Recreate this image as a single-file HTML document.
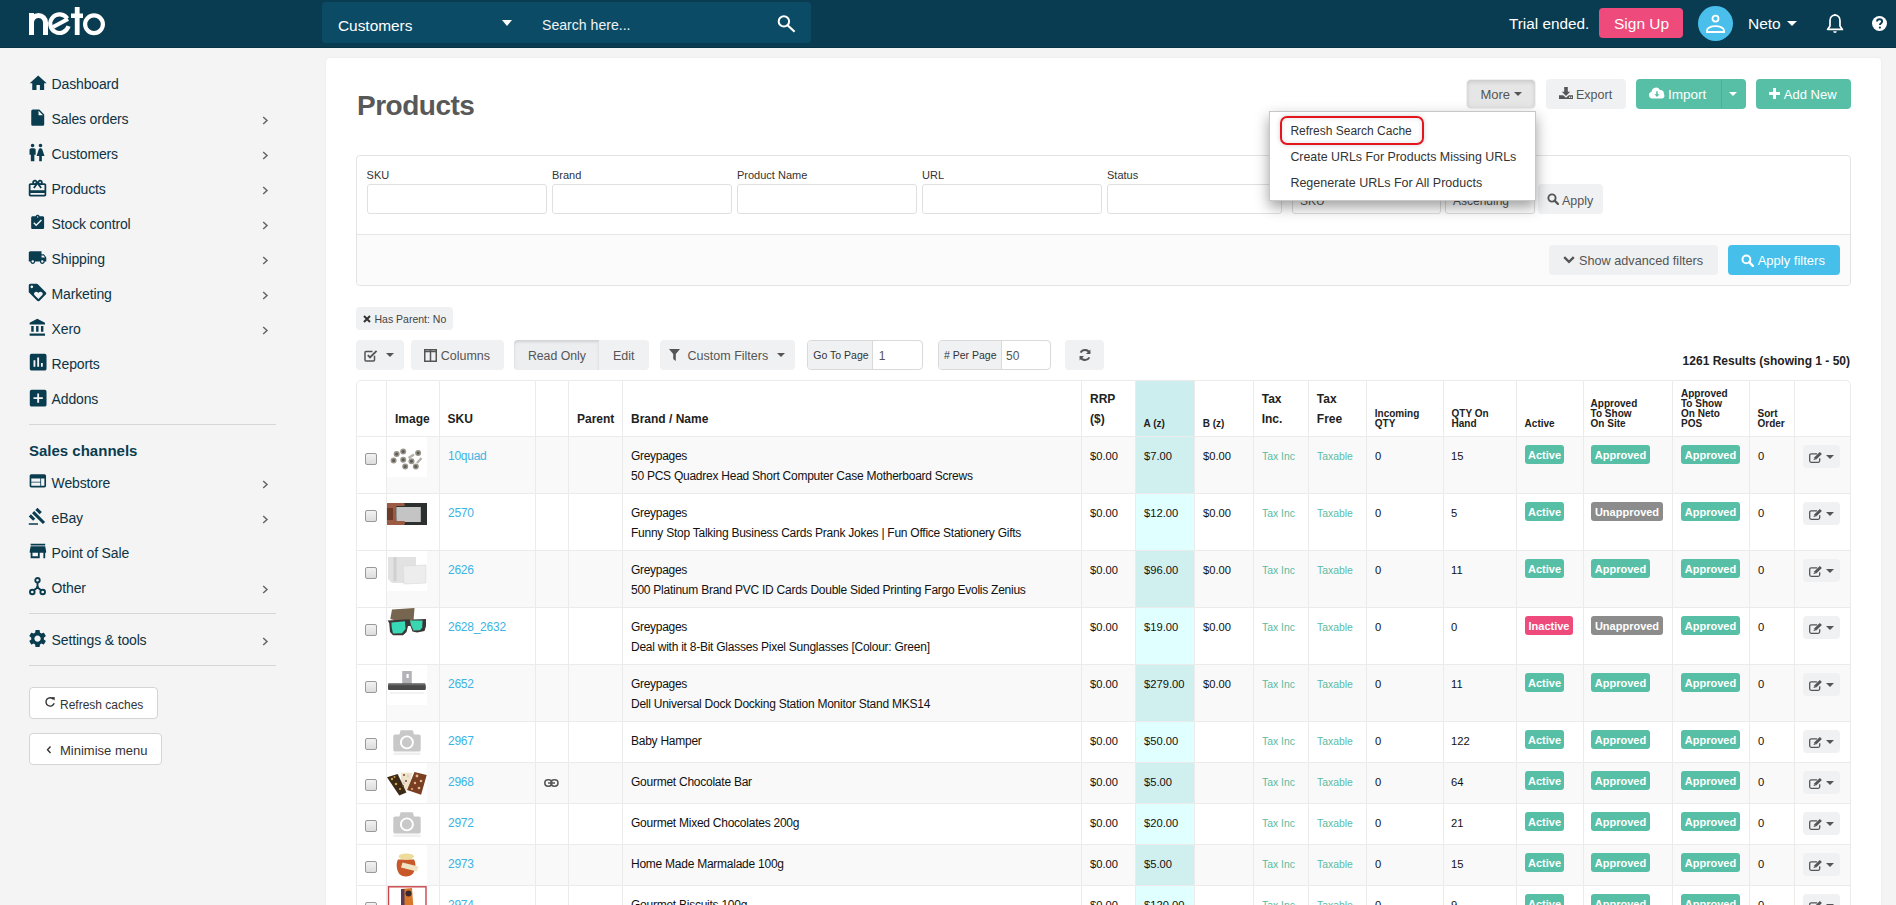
<!DOCTYPE html><html><head><meta charset="utf-8"><style>
html,body{margin:0;padding:0;}
body{width:1896px;height:905px;overflow:hidden;position:relative;background:#f4f4f4;font-family:"Liberation Sans", sans-serif;}
.a{position:absolute;display:block;}
.t{position:absolute;white-space:pre;line-height:1;}
</style></head><body>
<div class="a" style="left:0px;top:0px;width:1896px;height:48px;background:#093c51;"></div><div class="a" style="left:0px;top:47px;width:1896px;height:1px;background:#073345;"></div><svg class="a" style="left:0px;top:0px;" width="120" height="48" viewBox="0 0 120 48">
<g fill="none" stroke="#fff" stroke-width="5">
<path d="M31.5 35V13 M31.5 22.5a7 7 0 0 1 14 0V35"/>
</g>
<g fill="none" stroke="#fff" stroke-width="4.2">
<path d="M68.5 26.2 A9.3 9.3 0 1 1 67.3 18.5"/>
<path d="M53 27 L68 19"/>
<circle cx="94" cy="24.2" r="8.9"/>
</g>
<rect x="74.8" y="7" width="4.8" height="28" fill="#fff"/>
<rect x="71" y="13.5" width="12" height="4.5" fill="#fff"/>
</svg><div class="a" style="left:322px;top:2px;width:489px;height:41px;background:#0c4b66;border-radius:4px;"></div><div class="t" style="left:338.00px;top:17.96px;font-size:15.4px;color:#fff;font-weight:normal;">Customers</div><svg class="a" style="left:502px;top:20px;" width="10" height="6" viewBox="0 0 10 6"><path d="M0 0H10L5 6z" fill="#fff"/></svg><div class="t" style="left:542.00px;top:18.06px;font-size:14.1px;color:#eef3f5;font-weight:normal;">Search here...</div><svg class="a" style="left:775px;top:12px;" width="24" height="24" viewBox="0 0 24 24"><circle cx="8.9" cy="9.4" r="5.2" fill="none" stroke="#fff" stroke-width="2"/><path d="M12.6 13.2L19.6 19.8" stroke="#fff" stroke-width="2.2"/></svg><div class="t" style="left:1509.00px;top:16.05px;font-size:15.3px;color:#fff;font-weight:normal;">Trial ended.</div><div class="a" style="left:1599px;top:8px;width:84px;height:30px;background:#ee4a7c;border-radius:4px;"></div><div class="t" style="left:1614.00px;top:15.88px;font-size:15.5px;color:#fff;font-weight:normal;">Sign Up</div><div class="a" style="left:1698px;top:6px;width:35px;height:35px;background:#4bbfeb;border-radius:50%;"></div><svg class="a" style="left:1704px;top:12px;" width="24" height="24" viewBox="0 0 24 24"><circle cx="11.5" cy="6.6" r="3" fill="none" stroke="#fff" stroke-width="1.8"/><path d="M3 20v-1.5c0-2.5 4-4.3 8.5-4.3s8.5 1.8 8.5 4.3V20z" fill="none" stroke="#fff" stroke-width="1.8"/></svg><div class="t" style="left:1748.00px;top:15.88px;font-size:15.5px;color:#fff;font-weight:normal;">Neto</div><svg class="a" style="left:1787px;top:21px;" width="10" height="5" viewBox="0 0 10 5"><path d="M0 0H10L5 5z" fill="#fff"/></svg><svg class="a" style="left:1825px;top:13px;" width="20" height="21" viewBox="0 0 20 21"><path d="M10 2.2c-3.2 0-5 2.6-5 5.6v5.2L2.6 16.4h14.8L15 13V7.8c0-3-1.8-5.6-5-5.6z" fill="none" stroke="#fff" stroke-width="1.7" stroke-linejoin="round"/><path d="M8.2 18.2h3.6a1.8 1.8 0 0 1-3.6 0z" fill="#fff"/><rect x="9.2" y="1" width="1.6" height="2" fill="#fff"/></svg><svg class="a" style="left:1872px;top:16px;" width="15" height="15" viewBox="0 0 15 15"><circle cx="7.5" cy="7.5" r="7.5" fill="#fff"/><path d="M5 5.6c0-1.5 1.1-2.4 2.6-2.4s2.5.9 2.5 2.2c0 1.8-2.2 1.9-2.2 3.6" fill="none" stroke="#093c51" stroke-width="1.9"/><circle cx="7.9" cy="11.6" r="1.1" fill="#093c51"/></svg><div class="t" style="left:51.60px;top:77.15px;font-size:14px;color:#0d3344;font-weight:normal;letter-spacing:-0.15px;">Dashboard</div><svg class="a" style="left:27.60px;top:72.75px;" width="20.40" height="20.40" viewBox="0 0 24 24"><path fill="#0a3c50" fill-rule="evenodd" d="M10 20v-6h4v6h5v-8h3L12 3 2 12h3v8z"/></svg><div class="t" style="left:51.60px;top:112.15px;font-size:14px;color:#0d3344;font-weight:normal;letter-spacing:-0.15px;">Sales orders</div><svg class="a" style="left:27.85px;top:107.50px;" width="19.44" height="19.44" viewBox="0 0 24 24"><path fill="#0a3c50" fill-rule="evenodd" d="M6 2c-1.1 0-1.99.9-1.99 2L4 20c0 1.1.89 2 1.99 2H18c1.1 0 2-.9 2-2V8l-6-6H6zm7 7V3.5L18.5 9H13z"/></svg><svg class="a" style="left:261px;top:115.5px;" width="8" height="9" viewBox="0 0 8 9"><path d="M2.2 1L6 4.5L2.2 8" fill="none" stroke="#666" stroke-width="1.5"/></svg><div class="t" style="left:51.60px;top:147.15px;font-size:14px;color:#0d3344;font-weight:normal;letter-spacing:-0.15px;">Customers</div><svg class="a" style="left:26.10px;top:141.90px;" width="21.12" height="21.12" viewBox="0 0 24 24"><path fill="#0a3c50" fill-rule="evenodd" d="M5.5 22v-7.5H4V9c0-1.1.9-2 2-2h3c1.1 0 2 .9 2 2v5.5H9.5V22h-4zM18 22v-6h3l-2.54-7.63C18.18 7.55 17.42 7 16.56 7h-.12c-.86 0-1.63.55-1.9 1.37L12 16h3v6h3zM7.5 6c1.11 0 2-.89 2-2s-.89-2-2-2-2 .89-2 2 .89 2 2 2zm9 0c1.11 0 2-.89 2-2s-.89-2-2-2-2 .89-2 2 .89 2 2 2z"/></svg><svg class="a" style="left:261px;top:150.5px;" width="8" height="9" viewBox="0 0 8 9"><path d="M2.2 1L6 4.5L2.2 8" fill="none" stroke="#666" stroke-width="1.5"/></svg><div class="t" style="left:51.60px;top:182.15px;font-size:14px;color:#0d3344;font-weight:normal;letter-spacing:-0.15px;">Products</div><svg class="a" style="left:26.95px;top:177.65px;" width="21.00" height="21.00" viewBox="0 0 24 24"><path fill="#0a3c50" fill-rule="evenodd" d="M20 6h-2.18c.11-.31.18-.65.18-1 0-1.66-1.34-3-3-3-1.05 0-1.96.54-2.5 1.35l-.5.67-.5-.68C10.96 2.54 10.05 2 9 2 7.34 2 6 3.34 6 5c0 .35.07.69.18 1H4c-1.11 0-1.99.89-1.99 2L2 19c0 1.11.89 2 2 2h16c1.11 0 2-.89 2-2V8c0-1.11-.89-2-2-2zm-5-2c.55 0 1 .45 1 1s-.45 1-1 1-1-.45-1-1 .45-1 1-1zM9 4c.55 0 1 .45 1 1s-.45 1-1 1-1-.45-1-1 .45-1 1-1zm11 15H4v-2h16v2zm0-5H4V8h5.08L7 10.83 8.62 12 11 8.76l1-1.36 1 1.36L15.38 12 17 10.83 14.92 8H20v6z"/></svg><svg class="a" style="left:261px;top:185.5px;" width="8" height="9" viewBox="0 0 8 9"><path d="M2.2 1L6 4.5L2.2 8" fill="none" stroke="#666" stroke-width="1.5"/></svg><div class="t" style="left:51.60px;top:217.15px;font-size:14px;color:#0d3344;font-weight:normal;letter-spacing:-0.15px;">Stock control</div><svg class="a" style="left:28.94px;top:214.00px;" width="17.28" height="17.28" viewBox="0 0 24 24"><path fill="#0a3c50" fill-rule="evenodd" d="M19 3h-4.18C14.4 1.84 13.3 1 12 1c-1.3 0-2.4.84-2.82 2H5c-1.1 0-2 .9-2 2v14c0 1.1.9 2 2 2h14c1.1 0 2-.9 2-2V5c0-1.1-.9-2-2-2zm-7 0c.55 0 1 .45 1 1s-.45 1-1 1-1-.45-1-1 .45-1 1-1zm-2 14l-4-4 1.41-1.41L10 14.17l6.59-6.59L18 9l-8 8z"/></svg><svg class="a" style="left:261px;top:220.5px;" width="8" height="9" viewBox="0 0 8 9"><path d="M2.2 1L6 4.5L2.2 8" fill="none" stroke="#666" stroke-width="1.5"/></svg><div class="t" style="left:51.60px;top:252.15px;font-size:14px;color:#0d3344;font-weight:normal;letter-spacing:-0.15px;">Shipping</div><svg class="a" style="left:27.90px;top:247.70px;" width="19.08" height="19.08" viewBox="0 0 24 24"><path fill="#0a3c50" fill-rule="evenodd" d="M20 8h-3V4H3c-1.1 0-2 .9-2 2v11h2c0 1.66 1.34 3 3 3s3-1.34 3-3h6c0 1.66 1.34 3 3 3s3-1.34 3-3h2v-5l-3-4zM6 18.5c-.83 0-1.5-.67-1.5-1.5s.67-1.5 1.5-1.5 1.5.67 1.5 1.5-.67 1.5-1.5 1.5zm13.5-9l1.96 2.5H17V9.5h2.5zm-1.5 9c-.83 0-1.5-.67-1.5-1.5s.67-1.5 1.5-1.5 1.5.67 1.5 1.5-.67 1.5-1.5 1.5z"/></svg><svg class="a" style="left:261px;top:255.5px;" width="8" height="9" viewBox="0 0 8 9"><path d="M2.2 1L6 4.5L2.2 8" fill="none" stroke="#666" stroke-width="1.5"/></svg><div class="t" style="left:51.60px;top:287.15px;font-size:14px;color:#0d3344;font-weight:normal;letter-spacing:-0.15px;">Marketing</div><svg class="a" style="left:26.95px;top:282.45px;" width="21.00" height="21.00" viewBox="0 0 24 24"><path fill="#0a3c50" fill-rule="evenodd" d="M21.41 11.58l-9-9C12.05 2.22 11.55 2 11 2H4c-1.1 0-2 .9-2 2v7c0 .55.22 1.05.59 1.42l9 9c.36.36.86.58 1.41.58.55 0 1.05-.22 1.41-.59l7-7c.37-.36.59-.86.59-1.41 0-.55-.23-1.06-.59-1.42zM5.5 7C4.67 7 4 6.33 4 5.5S4.67 4 5.5 4 7 4.67 7 5.5 6.33 7 5.5 7zm11.77 8.27L13 19.54l-4.27-4.27C8.28 14.81 8 14.19 8 13.5c0-1.38 1.12-2.5 2.5-2.5.69 0 1.32.28 1.77.74l.73.72.73-.73c.45-.45 1.08-.73 1.77-.73 1.38 0 2.5 1.12 2.5 2.5 0 .69-.28 1.32-.73 1.77z"/></svg><svg class="a" style="left:261px;top:290.5px;" width="8" height="9" viewBox="0 0 8 9"><path d="M2.2 1L6 4.5L2.2 8" fill="none" stroke="#666" stroke-width="1.5"/></svg><div class="t" style="left:51.60px;top:322.15px;font-size:14px;color:#0d3344;font-weight:normal;letter-spacing:-0.15px;">Xero</div><svg class="a" style="left:27.98px;top:318.20px;" width="19.44" height="19.44" viewBox="0 0 24 24"><path fill="#0a3c50" fill-rule="evenodd" d="M4 10v7h3v-7H4zm6 0v7h3v-7h-3zM2 22h19v-3H2v3zm14-12v7h3v-7h-3zm-4.5-9L2 6v2h19V6l-9.5-5z"/></svg><svg class="a" style="left:261px;top:325.5px;" width="8" height="9" viewBox="0 0 8 9"><path d="M2.2 1L6 4.5L2.2 8" fill="none" stroke="#666" stroke-width="1.5"/></svg><div class="t" style="left:51.60px;top:357.15px;font-size:14px;color:#0d3344;font-weight:normal;letter-spacing:-0.15px;">Reports</div><svg class="a" style="left:26.50px;top:350.90px;" width="22.32" height="22.32" viewBox="0 0 24 24"><path fill="#0a3c50" fill-rule="evenodd" d="M19 3H5c-1.1 0-2 .9-2 2v14c0 1.1.9 2 2 2h14c1.1 0 2-.9 2-2V5c0-1.1-.9-2-2-2zM9 17H7v-7h2v7zm4 0h-2V7h2v10zm4 0h-2v-4h2v4z"/></svg><div class="t" style="left:51.60px;top:392.15px;font-size:14px;color:#0d3344;font-weight:normal;letter-spacing:-0.15px;">Addons</div><svg class="a" style="left:26.50px;top:386.60px;" width="22.32" height="22.32" viewBox="0 0 24 24"><path fill="#0a3c50" fill-rule="evenodd" d="M19 3H5c-1.11 0-2 .9-2 2v14c0 1.1.89 2 2 2h14c1.1 0 2-.9 2-2V5c0-1.1-.9-2-2-2zm-2 10h-4v4h-2v-4H7v-2h4V7h2v4h4v2z"/></svg><div class="a" style="left:29px;top:424px;width:247px;height:1px;background:#d6d6d6;"></div><div class="t" style="left:29.00px;top:443.30px;font-size:15px;color:#0a3c50;font-weight:bold;">Sales channels</div><div class="t" style="left:51.60px;top:476.15px;font-size:14px;color:#0d3344;font-weight:normal;letter-spacing:-0.15px;">Webstore</div><svg class="a" style="left:27.56px;top:471.30px;" width="19.68" height="19.68" viewBox="0 0 24 24"><path fill="#0a3c50" fill-rule="evenodd" d="M20 4H4c-1.1 0-1.99.9-1.99 2L2 18c0 1.1.9 2 2 2h16c1.1 0 2-.9 2-2V6c0-1.1-.9-2-2-2zm-5 14H4v-4h11v4zm0-5H4V9h11v4zm5 5h-4V9h4v9z"/></svg><svg class="a" style="left:261px;top:479.5px;" width="8" height="9" viewBox="0 0 8 9"><path d="M2.2 1L6 4.5L2.2 8" fill="none" stroke="#666" stroke-width="1.5"/></svg><div class="t" style="left:51.60px;top:511.15px;font-size:14px;color:#0d3344;font-weight:normal;letter-spacing:-0.15px;">eBay</div><svg class="a" style="left:28.40px;top:507.00px;" width="18.48" height="18.48" viewBox="0 0 24 24"><path fill="#0a3c50" fill-rule="evenodd" d="M1 21h12v2H1zM5.245 8.07l2.83-2.827 14.14 14.142-2.828 2.828zM12.317 1l5.657 5.656-2.83 2.83-5.654-5.66zM3.825 9.485l5.657 5.657-2.828 2.828-5.657-5.657z"/></svg><svg class="a" style="left:261px;top:514.5px;" width="8" height="9" viewBox="0 0 8 9"><path d="M2.2 1L6 4.5L2.2 8" fill="none" stroke="#666" stroke-width="1.5"/></svg><div class="t" style="left:51.60px;top:546.15px;font-size:14px;color:#0d3344;font-weight:normal;letter-spacing:-0.15px;">Point of Sale</div><svg class="a" style="left:26.50px;top:539.90px;" width="21.84" height="21.84" viewBox="0 0 24 24"><path fill="#0a3c50" fill-rule="evenodd" d="M20 4H4v2h16V4zm1 10v-2l-1-5H4l-1 5v2h1v6h10v-6h4v6h2v-6h1zm-9 4H6v-4h6v4z"/></svg><div class="t" style="left:51.60px;top:581.15px;font-size:14px;color:#0d3344;font-weight:normal;letter-spacing:-0.15px;">Other</div><svg class="a" style="left:261px;top:584.5px;" width="8" height="9" viewBox="0 0 8 9"><path d="M2.2 1L6 4.5L2.2 8" fill="none" stroke="#666" stroke-width="1.5"/></svg><svg class="a" style="left:29px;top:577px;" width="17" height="19" viewBox="0 0 17 19"><g fill="none" stroke="#0b3b4f" stroke-width="1.9"><circle cx="8.5" cy="3.2" r="2.2"/><circle cx="3.3" cy="15" r="2.3"/><circle cx="13.7" cy="15" r="2.3"/><path d="M8.5 5.4V10.5L4.8 13.3M8.5 10.5L12.2 13.3"/></g><circle cx="8.5" cy="10.5" r="1.4" fill="#0b3b4f"/></svg><div class="a" style="left:29px;top:613px;width:247px;height:1px;background:#d6d6d6;"></div><div class="t" style="left:51.60px;top:633.15px;font-size:14px;color:#0d3344;font-weight:normal;letter-spacing:-0.15px;">Settings &amp; tools</div><svg class="a" style="left:26.80px;top:627.80px;" width="21.12" height="21.12" viewBox="0 0 24 24"><path fill="#0a3c50" fill-rule="evenodd" d="M19.14 12.94c.04-.3.06-.61.06-.94 0-.32-.02-.64-.07-.94l2.03-1.58c.18-.14.23-.41.12-.61l-1.92-3.32c-.12-.22-.37-.29-.59-.22l-2.39.96c-.5-.38-1.03-.7-1.62-.94l-.36-2.54c-.04-.24-.24-.41-.48-.41h-3.84c-.24 0-.43.17-.47.41l-.36 2.54c-.59.24-1.13.57-1.62.94l-2.39-.96c-.22-.08-.47 0-.59.22L2.74 8.87c-.12.21-.08.47.12.61l2.03 1.58c-.05.3-.09.63-.09.94s.02.64.07.94l-2.03 1.58c-.18.14-.23.41-.12.61l1.92 3.32c.12.22.37.29.59.22l2.39-.96c.5.38 1.03.7 1.62.94l.36 2.54c.05.24.24.41.48.41h3.84c.24 0 .44-.17.47-.41l.36-2.54c.59-.24 1.13-.56 1.62-.94l2.39.96c.22.08.47 0 .59-.22l1.92-3.32c.12-.22.07-.47-.12-.61l-2.01-1.58zM12 15.6c-1.98 0-3.6-1.62-3.6-3.6s1.62-3.6 3.6-3.6 3.6 1.62 3.6 3.6-1.62 3.6-3.6 3.6z"/></svg><svg class="a" style="left:261px;top:636.5px;" width="8" height="9" viewBox="0 0 8 9"><path d="M2.2 1L6 4.5L2.2 8" fill="none" stroke="#666" stroke-width="1.5"/></svg><div class="a" style="left:29px;top:665px;width:247px;height:1px;background:#d6d6d6;"></div><div class="a" style="left:29px;top:687px;width:129px;height:32px;background:#fff;border:1px solid #d4d4d4;border-radius:4px;box-sizing:border-box;"></div><div class="t" style="left:60.00px;top:698.84px;font-size:12px;color:#333;font-weight:normal;">Refresh caches</div><svg class="a" style="left:44px;top:696px;" width="12" height="12" viewBox="0 0 12 12"><path d="M9.6 3.4A4.2 4.2 0 1 0 10.2 7.2" fill="none" stroke="#333" stroke-width="1.4"/><path d="M7.4 1L10.8 1.2L10.6 4.6z" fill="#333"/></svg><div class="a" style="left:29px;top:733px;width:133px;height:32px;background:#fff;border:1px solid #d4d4d4;border-radius:4px;box-sizing:border-box;"></div><div class="t" style="left:60.00px;top:744.00px;font-size:13px;color:#333;font-weight:normal;">Minimise menu</div><svg class="a" style="left:45px;top:745px;" width="8" height="10" viewBox="0 0 8 10"><path d="M5.5 1.5L2.5 4.8L5.5 8" fill="none" stroke="#333" stroke-width="1.4"/></svg><div class="a" style="left:326px;top:58px;width:1555px;height:900px;background:#fff;border-radius:4px;box-shadow:0 0 3px rgba(0,0,0,.05);"></div><div class="t" style="left:357.00px;top:92.30px;font-size:28px;color:#585858;font-weight:bold;letter-spacing:-0.5px;">Products</div><div class="a" style="left:1467px;top:80px;width:68px;height:28px;background:#e6e6e6;border-radius:4px;box-shadow:inset 0 2px 4px rgba(0,0,0,.13), 0 0 0 1px rgba(0,0,0,.06);"></div><div class="t" style="left:1480.40px;top:88.00px;font-size:13px;color:#555;font-weight:normal;">More</div><svg class="a" style="left:1514px;top:92px;" width="8" height="4" viewBox="0 0 8 4"><path d="M0 0H8L4 4z" fill="#555"/></svg><div class="a" style="left:1546px;top:79px;width:80px;height:30px;background:#f0f1f3;border-radius:4px;"></div><svg class="a" style="left:1559px;top:87px;" width="14" height="12" viewBox="0 0 14 12"><path d="M5.2 0h3.6v4.8h2.4L7 9 2.8 4.8h2.4z" fill="#555"/><path d="M0 8.2h4.2l2.8 2.6 2.8-2.6H14V12H0z" fill="#555"/><circle cx="10.6" cy="10.3" r=".7" fill="#f0f1f3"/><circle cx="12.4" cy="10.3" r=".7" fill="#f0f1f3"/></svg><div class="t" style="left:1576.00px;top:89.42px;font-size:12.5px;color:#555;font-weight:normal;">Export</div><div class="a" style="left:1636px;top:79px;width:110px;height:30px;background:#57bfa6;border-radius:4px;"></div><div class="a" style="left:1721px;top:80px;width:1px;height:28px;background:#4fae97;"></div><svg class="a" style="left:1649px;top:86px;" width="16" height="13" viewBox="0 0 16 13"><path d="M3.6 12.5A3.4 3.4 0 0 1 2.6 5.8 4.4 4.4 0 0 1 10.9 4 3.3 3.3 0 0 1 14.8 8a2.8 2.8 0 0 1-1.6 4.5z" fill="#fff"/><path d="M7.2 5.2h1.6v3h1.7L8 11 5.5 8.2h1.7z" fill="#57bfa6"/></svg><div class="t" style="left:1668.00px;top:87.57px;font-size:13.5px;color:#fff;font-weight:normal;">Import</div><svg class="a" style="left:1729px;top:92px;" width="8" height="4" viewBox="0 0 8 4"><path d="M0 0H8L4 4z" fill="#fff"/></svg><div class="a" style="left:1756px;top:79px;width:95px;height:30px;background:#57bfa6;border-radius:4px;"></div><svg class="a" style="left:1769px;top:88px;" width="11" height="11" viewBox="0 0 11 11"><path d="M4 0h3v4h4v3H7v4H4V7H0V4h4z" fill="#fff"/></svg><div class="t" style="left:1783.80px;top:88.00px;font-size:13px;color:#fff;font-weight:normal;">Add New</div><div class="a" style="left:356px;top:155px;width:1495px;height:131px;background:#fff;border:1px solid #e3e3e3;border-radius:4px;box-sizing:border-box;overflow:hidden;"></div><div class="a" style="left:357px;top:234px;width:1493px;height:51px;background:#fbfbfb;border-top:1px solid #e6e6e6;box-sizing:border-box;border-radius:0 0 4px 4px;"></div><div class="t" style="left:366.60px;top:169.69px;font-size:11px;color:#333;font-weight:normal;">SKU</div><div class="t" style="left:552.00px;top:169.69px;font-size:11px;color:#333;font-weight:normal;">Brand</div><div class="t" style="left:737.00px;top:169.69px;font-size:11px;color:#333;font-weight:normal;">Product Name</div><div class="t" style="left:922.00px;top:169.69px;font-size:11px;color:#333;font-weight:normal;">URL</div><div class="t" style="left:1107.00px;top:169.69px;font-size:11px;color:#333;font-weight:normal;">Status</div><div class="a" style="left:367px;top:184px;width:180px;height:30px;background:#fff;border:1px solid #e0e0e0;border-radius:3px;box-sizing:border-box;"></div><div class="a" style="left:552px;top:184px;width:180px;height:30px;background:#fff;border:1px solid #e0e0e0;border-radius:3px;box-sizing:border-box;"></div><div class="a" style="left:737px;top:184px;width:180px;height:30px;background:#fff;border:1px solid #e0e0e0;border-radius:3px;box-sizing:border-box;"></div><div class="a" style="left:922px;top:184px;width:180px;height:30px;background:#fff;border:1px solid #e0e0e0;border-radius:3px;box-sizing:border-box;"></div><div class="a" style="left:1107px;top:184px;width:175px;height:30px;background:#fff;border:1px solid #e0e0e0;border-radius:3px;box-sizing:border-box;"></div><div class="a" style="left:1292px;top:184px;width:149px;height:30px;background:#fff;border:1px solid #dcdcdc;border-radius:3px;box-sizing:border-box;"></div><div class="t" style="left:1300.00px;top:194.84px;font-size:12px;color:#555;font-weight:normal;">SKU</div><div class="a" style="left:1445px;top:184px;width:90px;height:30px;background:#fff;border:1px solid #dcdcdc;border-radius:3px;box-sizing:border-box;"></div><div class="t" style="left:1453.00px;top:194.84px;font-size:12px;color:#555;font-weight:normal;">Ascending</div><div class="a" style="left:1538px;top:184px;width:65px;height:30px;background:#f0f1f3;border-radius:4px;"></div><svg class="a" style="left:1547px;top:193px;" width="12" height="12" viewBox="0 0 12 12"><circle cx="5" cy="5" r="3.6" fill="none" stroke="#555" stroke-width="1.9"/><path d="M7.6 7.6L11 11" stroke="#555" stroke-width="2.2" stroke-linecap="round"/></svg><div class="t" style="left:1562.00px;top:195.42px;font-size:12.5px;color:#555;font-weight:normal;">Apply</div><div class="a" style="left:1549px;top:245px;width:169px;height:30px;background:#eef0f2;border-radius:4px;"></div><svg class="a" style="left:1563px;top:255px;" width="12" height="9" viewBox="0 0 12 9"><path d="M1.2 2.2L6 6.8L10.8 2.2" fill="none" stroke="#555" stroke-width="2.4"/></svg><div class="t" style="left:1579.00px;top:255.25px;font-size:12.7px;color:#555;font-weight:normal;">Show advanced filters</div><div class="a" style="left:1728px;top:245px;width:112px;height:30px;background:#47bfeb;border-radius:4px;"></div><svg class="a" style="left:1741px;top:254px;" width="13" height="13" viewBox="0 0 13 13"><circle cx="5.4" cy="5.4" r="3.9" fill="none" stroke="#fff" stroke-width="2"/><path d="M8.2 8.2L11.8 11.8" stroke="#fff" stroke-width="2.4" stroke-linecap="round"/></svg><div class="t" style="left:1757.70px;top:254.00px;font-size:13px;color:#fff;font-weight:normal;">Apply filters</div><div class="a" style="left:1269px;top:111px;width:267px;height:90px;background:#fff;border:1px solid rgba(0,0,0,.22);box-sizing:border-box;box-shadow:0 6px 13px rgba(0,0,0,.38);"></div><div class="a" style="left:1280px;top:116px;width:144px;height:29px;border:2px solid #e3161d;border-radius:7px;box-sizing:border-box;box-shadow:0 0 5px rgba(0,0,0,.18), inset 0 0 5px rgba(0,0,0,.12);"></div><div class="t" style="left:1290.40px;top:124.84px;font-size:12px;color:#333;font-weight:normal;">Refresh Search Cache</div><div class="t" style="left:1290.40px;top:150.50px;font-size:12.4px;color:#333;font-weight:normal;">Create URLs For Products Missing URLs</div><div class="t" style="left:1290.40px;top:177.42px;font-size:12.5px;color:#333;font-weight:normal;">Regenerate URLs For All Products</div><div class="a" style="left:356px;top:307px;width:97px;height:23px;background:#f0f1f3;border-radius:4px;"></div><svg class="a" style="left:363px;top:315px;" width="8" height="8" viewBox="0 0 8 8"><path d="M1 1L7 7M7 1L1 7" stroke="#333" stroke-width="2"/></svg><div class="t" style="left:374.50px;top:314.11px;font-size:10.5px;color:#444;font-weight:normal;">Has Parent: No</div><div class="a" style="left:356px;top:340px;width:48px;height:30px;background:#f0f1f3;border-radius:4px;"></div><svg class="a" style="left:364px;top:349px;" width="14" height="13" viewBox="0 0 14 13"><path d="M10.5 6.8V11a1 1 0 0 1-1 1H2a1 1 0 0 1-1-1V3.5a1 1 0 0 1 1-1h6.5" fill="none" stroke="#555" stroke-width="1.5"/><path d="M3.8 6.2L6 8.4L12.6 1.8" fill="none" stroke="#555" stroke-width="1.9"/></svg><svg class="a" style="left:386px;top:353px;" width="8" height="4" viewBox="0 0 8 4"><path d="M0 0H8L4 4z" fill="#555"/></svg><div class="a" style="left:411px;top:340px;width:93px;height:30px;background:#f0f1f3;border-radius:4px;"></div><svg class="a" style="left:424px;top:349px;" width="13" height="13" viewBox="0 0 13 13"><rect x=".75" y=".75" width="11.5" height="11.5" fill="none" stroke="#555" stroke-width="1.5"/><path d="M6.5 1v11M1 2.5h11" stroke="#555" stroke-width="1.5"/></svg><div class="t" style="left:440.70px;top:350.42px;font-size:12.5px;color:#555;font-weight:normal;">Columns</div><div class="a" style="left:514px;top:340px;width:135px;height:30px;background:#f0f1f3;border-radius:4px;"></div><div class="a" style="left:514px;top:340px;width:85px;height:30px;background:#eceef0;border-radius:4px 0 0 4px;box-shadow:inset 0 2px 3px rgba(0,0,0,.12);"></div><div class="a" style="left:598px;top:341px;width:1px;height:28px;background:#e2e4e6;"></div><div class="t" style="left:527.90px;top:349.59px;font-size:12.3px;color:#555;font-weight:normal;">Read Only</div><div class="t" style="left:613.00px;top:350.42px;font-size:12.5px;color:#555;font-weight:normal;">Edit</div><div class="a" style="left:660px;top:340px;width:135px;height:30px;background:#f0f1f3;border-radius:4px;"></div><svg class="a" style="left:669px;top:349px;" width="11" height="12" viewBox="0 0 11 12"><path d="M0 0H11L6.8 5V12L4.2 10V5z" fill="#555"/></svg><div class="t" style="left:687.60px;top:350.42px;font-size:12.5px;color:#555;font-weight:normal;">Custom Filters</div><svg class="a" style="left:777px;top:353px;" width="8" height="4" viewBox="0 0 8 4"><path d="M0 0H8L4 4z" fill="#555"/></svg><div class="a" style="left:807px;top:340px;width:116px;height:30px;background:#fff;border:1px solid #d9d9d9;border-radius:4px;box-sizing:border-box;"></div><div class="a" style="left:808px;top:341px;width:65px;height:28px;background:#f0f1f3;border-right:1px solid #d9d9d9;box-sizing:border-box;border-radius:3px 0 0 3px;"></div><div class="t" style="left:813.30px;top:350.11px;font-size:10.5px;color:#333;font-weight:normal;">Go To Page</div><div class="t" style="left:878.80px;top:349.84px;font-size:12px;color:#555;font-weight:normal;">1</div><div class="a" style="left:938px;top:340px;width:113px;height:30px;background:#fff;border:1px solid #d9d9d9;border-radius:4px;box-sizing:border-box;"></div><div class="a" style="left:939px;top:341px;width:63px;height:28px;background:#f0f1f3;border-right:1px solid #d9d9d9;box-sizing:border-box;border-radius:3px 0 0 3px;"></div><div class="t" style="left:944.00px;top:350.11px;font-size:10.5px;color:#333;font-weight:normal;"># Per Page</div><div class="t" style="left:1006.00px;top:349.84px;font-size:12px;color:#555;font-weight:normal;">50</div><div class="a" style="left:1065px;top:340px;width:39px;height:30px;background:#f0f1f3;border-radius:4px;"></div><svg class="a" style="left:1078px;top:348px;" width="14" height="14" viewBox="0 0 14 14"><path d="M11.6 5.2A5 5 0 0 0 2.6 4.6M2.4 8.8A5 5 0 0 0 11.4 9.4" fill="none" stroke="#555" stroke-width="1.9"/><path d="M12.4 1.6V6H8z M1.6 12.4V8H6z" fill="#555"/></svg><div class="t" style="left:1850.00px;top:354.84px;font-size:12px;color:#222;font-weight:bold;transform:translateX(-100%);">1261 Results (showing 1 - 50)</div><div class="a" style="left:356px;top:380px;width:1495px;height:600px;background:#fff;border:1px solid #ebebeb;border-radius:5px;box-sizing:border-box;"></div><div class="a" style="left:1135px;top:381px;width:59px;height:55px;background:#cdeeee;"></div><div class="a" style="left:386px;top:436px;width:1464px;height:57px;background:#f9f9f9;"></div><div class="a" style="left:1135px;top:436px;width:59px;height:57px;background:#d0f0f0;"></div><div class="a" style="left:1135px;top:493px;width:59px;height:57px;background:#e0ffff;"></div><div class="a" style="left:386px;top:550px;width:1464px;height:57px;background:#f9f9f9;"></div><div class="a" style="left:1135px;top:550px;width:59px;height:57px;background:#d0f0f0;"></div><div class="a" style="left:1135px;top:607px;width:59px;height:57px;background:#e0ffff;"></div><div class="a" style="left:386px;top:664px;width:1464px;height:57px;background:#f9f9f9;"></div><div class="a" style="left:1135px;top:664px;width:59px;height:57px;background:#d0f0f0;"></div><div class="a" style="left:1135px;top:721px;width:59px;height:41px;background:#e0ffff;"></div><div class="a" style="left:386px;top:762px;width:1464px;height:41px;background:#f9f9f9;"></div><div class="a" style="left:1135px;top:762px;width:59px;height:41px;background:#d0f0f0;"></div><div class="a" style="left:1135px;top:803px;width:59px;height:41px;background:#e0ffff;"></div><div class="a" style="left:386px;top:844px;width:1464px;height:41px;background:#f9f9f9;"></div><div class="a" style="left:1135px;top:844px;width:59px;height:41px;background:#d0f0f0;"></div><div class="a" style="left:1135px;top:885px;width:59px;height:41px;background:#e0ffff;"></div><div class="a" style="left:356px;top:436px;width:1495px;height:1px;background:#ebebeb;"></div><div class="a" style="left:356px;top:493px;width:1495px;height:1px;background:#ebebeb;"></div><div class="a" style="left:356px;top:550px;width:1495px;height:1px;background:#ebebeb;"></div><div class="a" style="left:356px;top:607px;width:1495px;height:1px;background:#ebebeb;"></div><div class="a" style="left:356px;top:664px;width:1495px;height:1px;background:#ebebeb;"></div><div class="a" style="left:356px;top:721px;width:1495px;height:1px;background:#ebebeb;"></div><div class="a" style="left:356px;top:762px;width:1495px;height:1px;background:#ebebeb;"></div><div class="a" style="left:356px;top:803px;width:1495px;height:1px;background:#ebebeb;"></div><div class="a" style="left:356px;top:844px;width:1495px;height:1px;background:#ebebeb;"></div><div class="a" style="left:356px;top:885px;width:1495px;height:1px;background:#ebebeb;"></div><div class="a" style="left:386px;top:381px;width:1px;height:600px;background:#ebebeb;"></div><div class="a" style="left:439px;top:381px;width:1px;height:600px;background:#ebebeb;"></div><div class="a" style="left:535px;top:381px;width:1px;height:600px;background:#ebebeb;"></div><div class="a" style="left:568px;top:381px;width:1px;height:600px;background:#ebebeb;"></div><div class="a" style="left:622px;top:381px;width:1px;height:600px;background:#ebebeb;"></div><div class="a" style="left:1081px;top:381px;width:1px;height:600px;background:#ebebeb;"></div><div class="a" style="left:1135px;top:381px;width:1px;height:600px;background:#ebebeb;"></div><div class="a" style="left:1194px;top:381px;width:1px;height:600px;background:#ebebeb;"></div><div class="a" style="left:1253px;top:381px;width:1px;height:600px;background:#ebebeb;"></div><div class="a" style="left:1308px;top:381px;width:1px;height:600px;background:#ebebeb;"></div><div class="a" style="left:1366px;top:381px;width:1px;height:600px;background:#ebebeb;"></div><div class="a" style="left:1443px;top:381px;width:1px;height:600px;background:#ebebeb;"></div><div class="a" style="left:1516px;top:381px;width:1px;height:600px;background:#ebebeb;"></div><div class="a" style="left:1583px;top:381px;width:1px;height:600px;background:#ebebeb;"></div><div class="a" style="left:1672px;top:381px;width:1px;height:600px;background:#ebebeb;"></div><div class="a" style="left:1749px;top:381px;width:1px;height:600px;background:#ebebeb;"></div><div class="a" style="left:1794px;top:381px;width:1px;height:600px;background:#ebebeb;"></div><div class="t" style="left:395.00px;top:412.84px;font-size:12px;color:#222;font-weight:bold;">Image</div><div class="t" style="left:447.60px;top:412.84px;font-size:12px;color:#222;font-weight:bold;">SKU</div><div class="t" style="left:577.00px;top:412.84px;font-size:12px;color:#222;font-weight:bold;">Parent</div><div class="t" style="left:631.00px;top:412.84px;font-size:12px;color:#222;font-weight:bold;">Brand / Name</div><div class="t" style="left:1090.00px;top:392.84px;font-size:12px;color:#222;font-weight:bold;">RRP</div><div class="t" style="left:1090.00px;top:412.84px;font-size:12px;color:#222;font-weight:bold;">($)</div><div class="t" style="left:1143.60px;top:418.54px;font-size:10px;color:#222;font-weight:bold;">A (z)</div><div class="t" style="left:1202.70px;top:418.54px;font-size:10px;color:#222;font-weight:bold;">B (z)</div><div class="t" style="left:1261.70px;top:392.84px;font-size:12px;color:#222;font-weight:bold;">Tax</div><div class="t" style="left:1261.70px;top:412.84px;font-size:12px;color:#222;font-weight:bold;">Inc.</div><div class="t" style="left:1316.80px;top:392.84px;font-size:12px;color:#222;font-weight:bold;">Tax</div><div class="t" style="left:1316.80px;top:412.84px;font-size:12px;color:#222;font-weight:bold;">Free</div><div class="t" style="left:1374.80px;top:408.54px;font-size:10px;color:#222;font-weight:bold;">Incoming</div><div class="t" style="left:1374.80px;top:418.54px;font-size:10px;color:#222;font-weight:bold;">QTY</div><div class="t" style="left:1451.50px;top:408.54px;font-size:10px;color:#222;font-weight:bold;">QTY On</div><div class="t" style="left:1451.50px;top:418.54px;font-size:10px;color:#222;font-weight:bold;">Hand</div><div class="t" style="left:1524.60px;top:418.54px;font-size:10px;color:#222;font-weight:bold;">Active</div><div class="t" style="left:1590.60px;top:398.54px;font-size:10px;color:#222;font-weight:bold;">Approved</div><div class="t" style="left:1590.60px;top:408.54px;font-size:10px;color:#222;font-weight:bold;">To Show</div><div class="t" style="left:1590.60px;top:418.54px;font-size:10px;color:#222;font-weight:bold;">On Site</div><div class="t" style="left:1681.00px;top:388.54px;font-size:10px;color:#222;font-weight:bold;">Approved</div><div class="t" style="left:1681.00px;top:398.54px;font-size:10px;color:#222;font-weight:bold;">To Show</div><div class="t" style="left:1681.00px;top:408.54px;font-size:10px;color:#222;font-weight:bold;">On Neto</div><div class="t" style="left:1681.00px;top:418.54px;font-size:10px;color:#222;font-weight:bold;">POS</div><div class="t" style="left:1757.50px;top:408.54px;font-size:10px;color:#222;font-weight:bold;">Sort</div><div class="t" style="left:1757.50px;top:418.54px;font-size:10px;color:#222;font-weight:bold;">Order</div><div class="a" style="left:365px;top:453px;width:12px;height:12px;background:linear-gradient(#f2f2f2,#dcdcdc);border:1px solid #999;border-radius:2px;box-sizing:border-box;"></div><svg class="a" style="left:387px;top:437px;" width="40" height="40" viewBox="0 0 40 40"><rect width="40" height="40" fill="#fff"/><circle cx="9.6" cy="16.9" r="3" fill="#9a968e"/><circle cx="9.6" cy="16.9" r="1.5" fill="#5e5a52"/><circle cx="16.2" cy="14.6" r="3" fill="#9a968e"/><circle cx="16.2" cy="14.6" r="1.5" fill="#5e5a52"/><circle cx="31.1" cy="15.9" r="3" fill="#9a968e"/><circle cx="31.1" cy="15.9" r="1.5" fill="#5e5a52"/><circle cx="6.6" cy="23.5" r="3" fill="#9a968e"/><circle cx="6.6" cy="23.5" r="1.5" fill="#5e5a52"/><circle cx="16.2" cy="22.8" r="3" fill="#9a968e"/><circle cx="16.2" cy="22.8" r="1.5" fill="#5e5a52"/><circle cx="24.5" cy="24.2" r="3" fill="#9a968e"/><circle cx="24.5" cy="24.2" r="1.5" fill="#5e5a52"/><circle cx="18.2" cy="29.5" r="3" fill="#9a968e"/><circle cx="18.2" cy="29.5" r="1.5" fill="#5e5a52"/><circle cx="28.8" cy="29.5" r="3" fill="#9a968e"/><circle cx="28.8" cy="29.5" r="1.5" fill="#5e5a52"/><path d="M21.5 21l5.5-3.5M30 26l4.5-5" stroke="#b5b1aa" stroke-width="2.4"/></svg><div class="t" style="left:448.00px;top:449.84px;font-size:12px;color:#3cb4e4;font-weight:normal;letter-spacing:-0.25px;">10quad</div><div class="t" style="left:631.00px;top:449.84px;font-size:12px;color:#111;font-weight:normal;letter-spacing:-0.3px;">Greypages</div><div class="t" style="left:631.00px;top:469.84px;font-size:12px;color:#111;font-weight:normal;letter-spacing:-0.25px;">50 PCS Quadrex Head Short Computer Case Motherboard Screws</div><div class="t" style="left:1090.00px;top:450.52px;font-size:11.2px;color:#111;font-weight:normal;">$0.00</div><div class="t" style="left:1144.00px;top:450.52px;font-size:11.2px;color:#111;font-weight:normal;">$7.00</div><div class="t" style="left:1203.00px;top:450.52px;font-size:11.2px;color:#111;font-weight:normal;">$0.00</div><div class="t" style="left:1262.00px;top:452.20px;font-size:10.4px;color:#5cbba2;font-weight:normal;">Tax Inc</div><div class="t" style="left:1317.00px;top:452.20px;font-size:10.4px;color:#5cbba2;font-weight:normal;">Taxable</div><div class="t" style="left:1375.00px;top:450.52px;font-size:11.2px;color:#111;font-weight:normal;">0</div><div class="t" style="left:1451.00px;top:450.52px;font-size:11.2px;color:#111;font-weight:normal;">15</div><div class="a" style="left:1525px;top:445px;width:39px;height:19px;background:#57bfa6;border-radius:3px;"></div><div class="t" style="left:1544.50px;top:449.69px;font-size:11px;color:#fff;font-weight:bold;transform:translateX(-50%);">Active</div><div class="a" style="left:1591px;top:445px;width:59px;height:19px;background:#57bfa6;border-radius:3px;"></div><div class="t" style="left:1620.50px;top:449.69px;font-size:11px;color:#fff;font-weight:bold;transform:translateX(-50%);">Approved</div><div class="a" style="left:1681px;top:445px;width:59px;height:19px;background:#57bfa6;border-radius:3px;"></div><div class="t" style="left:1710.50px;top:449.69px;font-size:11px;color:#fff;font-weight:bold;transform:translateX(-50%);">Approved</div><div class="t" style="left:1758.00px;top:450.52px;font-size:11.2px;color:#111;font-weight:normal;">0</div><div class="a" style="left:1803px;top:445px;width:37px;height:23px;background:#f0f1f3;border-radius:4px;"></div><svg class="a" style="left:1809px;top:451.5px;" width="14" height="11" viewBox="0 0 14 11"><path d="M8.2 1.8H2.2A1.5 1.5 0 0 0 .7 3.3v5.5a1.5 1.5 0 0 0 1.5 1.5h7a1.5 1.5 0 0 0 1.5-1.5V6.2" fill="none" stroke="#555" stroke-width="1.3"/><path d="M4.6 8l.6-2.4L10.8 0 12.9 2.1 7.2 7.6z" fill="#555"/><path d="M5.6 6.4l1.2 1.2" stroke="#f0f1f3" stroke-width=".7"/></svg><svg class="a" style="left:1826px;top:454.5px;" width="8" height="4" viewBox="0 0 8 4"><path d="M0 0H8L4 4z" fill="#555"/></svg><div class="a" style="left:365px;top:510px;width:12px;height:12px;background:linear-gradient(#f2f2f2,#dcdcdc);border:1px solid #999;border-radius:2px;box-sizing:border-box;"></div><svg class="a" style="left:387px;top:494px;" width="40" height="40" viewBox="0 0 40 40"><rect width="40" height="40" fill="#fff"/><rect x="0" y="9" width="40" height="22" fill="#2c3130"/><rect x="9.3" y="13" width="24.5" height="15" fill="#c4c4c4"/><path d="M0 9h17c1 .8 1 2.6 0 3H9.5c-.8 3-.8 10 0 15h8c.8 1 .6 3-.4 4H0z" fill="#9a5a43"/><path d="M0 14h6v12H0z" fill="#6d3a2a"/></svg><div class="t" style="left:448.00px;top:506.84px;font-size:12px;color:#3cb4e4;font-weight:normal;letter-spacing:-0.25px;">2570</div><div class="t" style="left:631.00px;top:506.84px;font-size:12px;color:#111;font-weight:normal;letter-spacing:-0.3px;">Greypages</div><div class="t" style="left:631.00px;top:526.84px;font-size:12px;color:#111;font-weight:normal;letter-spacing:-0.25px;">Funny Stop Talking Business Cards Prank Jokes | Fun Office Stationery Gifts</div><div class="t" style="left:1090.00px;top:507.52px;font-size:11.2px;color:#111;font-weight:normal;">$0.00</div><div class="t" style="left:1144.00px;top:507.52px;font-size:11.2px;color:#111;font-weight:normal;">$12.00</div><div class="t" style="left:1203.00px;top:507.52px;font-size:11.2px;color:#111;font-weight:normal;">$0.00</div><div class="t" style="left:1262.00px;top:509.20px;font-size:10.4px;color:#5cbba2;font-weight:normal;">Tax Inc</div><div class="t" style="left:1317.00px;top:509.20px;font-size:10.4px;color:#5cbba2;font-weight:normal;">Taxable</div><div class="t" style="left:1375.00px;top:507.52px;font-size:11.2px;color:#111;font-weight:normal;">0</div><div class="t" style="left:1451.00px;top:507.52px;font-size:11.2px;color:#111;font-weight:normal;">5</div><div class="a" style="left:1525px;top:502px;width:39px;height:19px;background:#57bfa6;border-radius:3px;"></div><div class="t" style="left:1544.50px;top:506.69px;font-size:11px;color:#fff;font-weight:bold;transform:translateX(-50%);">Active</div><div class="a" style="left:1591px;top:502px;width:72px;height:19px;background:#8c8c8c;border-radius:3px;"></div><div class="t" style="left:1627.00px;top:506.69px;font-size:11px;color:#fff;font-weight:bold;transform:translateX(-50%);">Unapproved</div><div class="a" style="left:1681px;top:502px;width:59px;height:19px;background:#57bfa6;border-radius:3px;"></div><div class="t" style="left:1710.50px;top:506.69px;font-size:11px;color:#fff;font-weight:bold;transform:translateX(-50%);">Approved</div><div class="t" style="left:1758.00px;top:507.52px;font-size:11.2px;color:#111;font-weight:normal;">0</div><div class="a" style="left:1803px;top:502px;width:37px;height:23px;background:#f0f1f3;border-radius:4px;"></div><svg class="a" style="left:1809px;top:508.5px;" width="14" height="11" viewBox="0 0 14 11"><path d="M8.2 1.8H2.2A1.5 1.5 0 0 0 .7 3.3v5.5a1.5 1.5 0 0 0 1.5 1.5h7a1.5 1.5 0 0 0 1.5-1.5V6.2" fill="none" stroke="#555" stroke-width="1.3"/><path d="M4.6 8l.6-2.4L10.8 0 12.9 2.1 7.2 7.6z" fill="#555"/><path d="M5.6 6.4l1.2 1.2" stroke="#f0f1f3" stroke-width=".7"/></svg><svg class="a" style="left:1826px;top:511.5px;" width="8" height="4" viewBox="0 0 8 4"><path d="M0 0H8L4 4z" fill="#555"/></svg><div class="a" style="left:365px;top:567px;width:12px;height:12px;background:linear-gradient(#f2f2f2,#dcdcdc);border:1px solid #999;border-radius:2px;box-sizing:border-box;"></div><svg class="a" style="left:387px;top:551px;" width="40" height="40" viewBox="0 0 40 40"><rect width="40" height="40" fill="#fff"/><path d="M1 6h28v24l-4 2H5l-4-4z" fill="#e2e2e2"/><path d="M8 6v24" stroke="#d0d0d0" stroke-width="3"/><path d="M16 15l23 -1v18l-22 1z" fill="#ededed" stroke="#d8d8d8" stroke-width=".6"/></svg><div class="t" style="left:448.00px;top:563.84px;font-size:12px;color:#3cb4e4;font-weight:normal;letter-spacing:-0.25px;">2626</div><div class="t" style="left:631.00px;top:563.84px;font-size:12px;color:#111;font-weight:normal;letter-spacing:-0.3px;">Greypages</div><div class="t" style="left:631.00px;top:583.84px;font-size:12px;color:#111;font-weight:normal;letter-spacing:-0.25px;">500 Platinum Brand PVC ID Cards Double Sided Printing Fargo Evolis Zenius</div><div class="t" style="left:1090.00px;top:564.52px;font-size:11.2px;color:#111;font-weight:normal;">$0.00</div><div class="t" style="left:1144.00px;top:564.52px;font-size:11.2px;color:#111;font-weight:normal;">$96.00</div><div class="t" style="left:1203.00px;top:564.52px;font-size:11.2px;color:#111;font-weight:normal;">$0.00</div><div class="t" style="left:1262.00px;top:566.20px;font-size:10.4px;color:#5cbba2;font-weight:normal;">Tax Inc</div><div class="t" style="left:1317.00px;top:566.20px;font-size:10.4px;color:#5cbba2;font-weight:normal;">Taxable</div><div class="t" style="left:1375.00px;top:564.52px;font-size:11.2px;color:#111;font-weight:normal;">0</div><div class="t" style="left:1451.00px;top:564.52px;font-size:11.2px;color:#111;font-weight:normal;">11</div><div class="a" style="left:1525px;top:559px;width:39px;height:19px;background:#57bfa6;border-radius:3px;"></div><div class="t" style="left:1544.50px;top:563.69px;font-size:11px;color:#fff;font-weight:bold;transform:translateX(-50%);">Active</div><div class="a" style="left:1591px;top:559px;width:59px;height:19px;background:#57bfa6;border-radius:3px;"></div><div class="t" style="left:1620.50px;top:563.69px;font-size:11px;color:#fff;font-weight:bold;transform:translateX(-50%);">Approved</div><div class="a" style="left:1681px;top:559px;width:59px;height:19px;background:#57bfa6;border-radius:3px;"></div><div class="t" style="left:1710.50px;top:563.69px;font-size:11px;color:#fff;font-weight:bold;transform:translateX(-50%);">Approved</div><div class="t" style="left:1758.00px;top:564.52px;font-size:11.2px;color:#111;font-weight:normal;">0</div><div class="a" style="left:1803px;top:559px;width:37px;height:23px;background:#f0f1f3;border-radius:4px;"></div><svg class="a" style="left:1809px;top:565.5px;" width="14" height="11" viewBox="0 0 14 11"><path d="M8.2 1.8H2.2A1.5 1.5 0 0 0 .7 3.3v5.5a1.5 1.5 0 0 0 1.5 1.5h7a1.5 1.5 0 0 0 1.5-1.5V6.2" fill="none" stroke="#555" stroke-width="1.3"/><path d="M4.6 8l.6-2.4L10.8 0 12.9 2.1 7.2 7.6z" fill="#555"/><path d="M5.6 6.4l1.2 1.2" stroke="#f0f1f3" stroke-width=".7"/></svg><svg class="a" style="left:1826px;top:568.5px;" width="8" height="4" viewBox="0 0 8 4"><path d="M0 0H8L4 4z" fill="#555"/></svg><div class="a" style="left:365px;top:624px;width:12px;height:12px;background:linear-gradient(#f2f2f2,#dcdcdc);border:1px solid #999;border-radius:2px;box-sizing:border-box;"></div><svg class="a" style="left:387px;top:608px;" width="40" height="40" viewBox="0 0 40 40"><rect width="40" height="40" fill="#fff"/><path d="M5 1.5L27.5 0 26.5 13 17 15 3.3 11z" fill="#77664f"/><path d="M0.6 12.5L22 11.3 24 13.5 26 11.5 39 11 39 18 37.5 23 30 24.5 25.5 23.5 23.5 18 21 18 19.5 24 16 27.2 6 27.2 3 24 2.2 15z" fill="#3b3535"/><path d="M4.4 14.5L18 13.2 18.5 21 15 25.2 6 25.5 4.8 20z" fill="#36d8b6"/><path d="M23 12.6L35.6 12.5 35.2 19.5 33 22.3 26.5 22.5 24 17z" fill="#3ad6b0"/></svg><div class="t" style="left:448.00px;top:620.84px;font-size:12px;color:#3cb4e4;font-weight:normal;letter-spacing:-0.25px;">2628_2632</div><div class="t" style="left:631.00px;top:620.84px;font-size:12px;color:#111;font-weight:normal;letter-spacing:-0.3px;">Greypages</div><div class="t" style="left:631.00px;top:640.84px;font-size:12px;color:#111;font-weight:normal;letter-spacing:-0.25px;">Deal with it 8-Bit Glasses Pixel Sunglasses [Colour: Green]</div><div class="t" style="left:1090.00px;top:621.52px;font-size:11.2px;color:#111;font-weight:normal;">$0.00</div><div class="t" style="left:1144.00px;top:621.52px;font-size:11.2px;color:#111;font-weight:normal;">$19.00</div><div class="t" style="left:1203.00px;top:621.52px;font-size:11.2px;color:#111;font-weight:normal;">$0.00</div><div class="t" style="left:1262.00px;top:623.20px;font-size:10.4px;color:#5cbba2;font-weight:normal;">Tax Inc</div><div class="t" style="left:1317.00px;top:623.20px;font-size:10.4px;color:#5cbba2;font-weight:normal;">Taxable</div><div class="t" style="left:1375.00px;top:621.52px;font-size:11.2px;color:#111;font-weight:normal;">0</div><div class="t" style="left:1451.00px;top:621.52px;font-size:11.2px;color:#111;font-weight:normal;">0</div><div class="a" style="left:1525px;top:616px;width:48px;height:19px;background:#ee4a7c;border-radius:3px;"></div><div class="t" style="left:1549.00px;top:620.69px;font-size:11px;color:#fff;font-weight:bold;transform:translateX(-50%);">Inactive</div><div class="a" style="left:1591px;top:616px;width:72px;height:19px;background:#8c8c8c;border-radius:3px;"></div><div class="t" style="left:1627.00px;top:620.69px;font-size:11px;color:#fff;font-weight:bold;transform:translateX(-50%);">Unapproved</div><div class="a" style="left:1681px;top:616px;width:59px;height:19px;background:#57bfa6;border-radius:3px;"></div><div class="t" style="left:1710.50px;top:620.69px;font-size:11px;color:#fff;font-weight:bold;transform:translateX(-50%);">Approved</div><div class="t" style="left:1758.00px;top:621.52px;font-size:11.2px;color:#111;font-weight:normal;">0</div><div class="a" style="left:1803px;top:616px;width:37px;height:23px;background:#f0f1f3;border-radius:4px;"></div><svg class="a" style="left:1809px;top:622.5px;" width="14" height="11" viewBox="0 0 14 11"><path d="M8.2 1.8H2.2A1.5 1.5 0 0 0 .7 3.3v5.5a1.5 1.5 0 0 0 1.5 1.5h7a1.5 1.5 0 0 0 1.5-1.5V6.2" fill="none" stroke="#555" stroke-width="1.3"/><path d="M4.6 8l.6-2.4L10.8 0 12.9 2.1 7.2 7.6z" fill="#555"/><path d="M5.6 6.4l1.2 1.2" stroke="#f0f1f3" stroke-width=".7"/></svg><svg class="a" style="left:1826px;top:625.5px;" width="8" height="4" viewBox="0 0 8 4"><path d="M0 0H8L4 4z" fill="#555"/></svg><div class="a" style="left:365px;top:681px;width:12px;height:12px;background:linear-gradient(#f2f2f2,#dcdcdc);border:1px solid #999;border-radius:2px;box-sizing:border-box;"></div><svg class="a" style="left:387px;top:665px;" width="40" height="40" viewBox="0 0 40 40"><rect width="40" height="40" fill="#fff"/><rect x="15.2" y="6" width="9.6" height="14.5" fill="#b4b4b8"/><rect x="19.5" y="9" width="2.2" height="4" fill="#fff"/><path d="M1.5 18.5h36.5l.8 2.3v3.5l-.8.8H1.8l-.8-.8v-3.5z" fill="#4a4a4a"/><path d="M1.5 18.5h36.5l.5 1.8H1z" fill="#6a6a6a"/><rect x="3" y="27" width="34" height="2" fill="#f2f2f2"/></svg><div class="t" style="left:448.00px;top:677.84px;font-size:12px;color:#3cb4e4;font-weight:normal;letter-spacing:-0.25px;">2652</div><div class="t" style="left:631.00px;top:677.84px;font-size:12px;color:#111;font-weight:normal;letter-spacing:-0.3px;">Greypages</div><div class="t" style="left:631.00px;top:697.84px;font-size:12px;color:#111;font-weight:normal;letter-spacing:-0.25px;">Dell Universal Dock Docking Station Monitor Stand MKS14</div><div class="t" style="left:1090.00px;top:678.52px;font-size:11.2px;color:#111;font-weight:normal;">$0.00</div><div class="t" style="left:1144.00px;top:678.52px;font-size:11.2px;color:#111;font-weight:normal;">$279.00</div><div class="t" style="left:1203.00px;top:678.52px;font-size:11.2px;color:#111;font-weight:normal;">$0.00</div><div class="t" style="left:1262.00px;top:680.20px;font-size:10.4px;color:#5cbba2;font-weight:normal;">Tax Inc</div><div class="t" style="left:1317.00px;top:680.20px;font-size:10.4px;color:#5cbba2;font-weight:normal;">Taxable</div><div class="t" style="left:1375.00px;top:678.52px;font-size:11.2px;color:#111;font-weight:normal;">0</div><div class="t" style="left:1451.00px;top:678.52px;font-size:11.2px;color:#111;font-weight:normal;">11</div><div class="a" style="left:1525px;top:673px;width:39px;height:19px;background:#57bfa6;border-radius:3px;"></div><div class="t" style="left:1544.50px;top:677.69px;font-size:11px;color:#fff;font-weight:bold;transform:translateX(-50%);">Active</div><div class="a" style="left:1591px;top:673px;width:59px;height:19px;background:#57bfa6;border-radius:3px;"></div><div class="t" style="left:1620.50px;top:677.69px;font-size:11px;color:#fff;font-weight:bold;transform:translateX(-50%);">Approved</div><div class="a" style="left:1681px;top:673px;width:59px;height:19px;background:#57bfa6;border-radius:3px;"></div><div class="t" style="left:1710.50px;top:677.69px;font-size:11px;color:#fff;font-weight:bold;transform:translateX(-50%);">Approved</div><div class="t" style="left:1758.00px;top:678.52px;font-size:11.2px;color:#111;font-weight:normal;">0</div><div class="a" style="left:1803px;top:673px;width:37px;height:23px;background:#f0f1f3;border-radius:4px;"></div><svg class="a" style="left:1809px;top:679.5px;" width="14" height="11" viewBox="0 0 14 11"><path d="M8.2 1.8H2.2A1.5 1.5 0 0 0 .7 3.3v5.5a1.5 1.5 0 0 0 1.5 1.5h7a1.5 1.5 0 0 0 1.5-1.5V6.2" fill="none" stroke="#555" stroke-width="1.3"/><path d="M4.6 8l.6-2.4L10.8 0 12.9 2.1 7.2 7.6z" fill="#555"/><path d="M5.6 6.4l1.2 1.2" stroke="#f0f1f3" stroke-width=".7"/></svg><svg class="a" style="left:1826px;top:682.5px;" width="8" height="4" viewBox="0 0 8 4"><path d="M0 0H8L4 4z" fill="#555"/></svg><div class="a" style="left:365px;top:738px;width:12px;height:12px;background:linear-gradient(#f2f2f2,#dcdcdc);border:1px solid #999;border-radius:2px;box-sizing:border-box;"></div><svg class="a" style="left:387px;top:722px;" width="40" height="40" viewBox="0 0 40 40"><path d="M12.4 12.5l1.2-4.3h12.2l1.2 4.3h4.9c1 0 1.8.8 1.8 1.8v13.5c0 1-.8 1.8-1.8 1.8H8.1c-1 0-1.8-.8-1.8-1.8V14.3c0-1 .8-1.8 1.8-1.8z" fill="#c8c8c8"/><circle cx="19.9" cy="20.4" r="6" fill="none" stroke="#fff" stroke-width="1.9"/><rect x="6.5" y="30.5" width="27" height="2.5" fill="#efefef"/></svg><div class="t" style="left:448.00px;top:734.84px;font-size:12px;color:#3cb4e4;font-weight:normal;letter-spacing:-0.25px;">2967</div><div class="t" style="left:631.00px;top:734.84px;font-size:12px;color:#111;font-weight:normal;letter-spacing:-0.25px;">Baby Hamper</div><div class="t" style="left:1090.00px;top:735.52px;font-size:11.2px;color:#111;font-weight:normal;">$0.00</div><div class="t" style="left:1144.00px;top:735.52px;font-size:11.2px;color:#111;font-weight:normal;">$50.00</div><div class="t" style="left:1262.00px;top:737.20px;font-size:10.4px;color:#5cbba2;font-weight:normal;">Tax Inc</div><div class="t" style="left:1317.00px;top:737.20px;font-size:10.4px;color:#5cbba2;font-weight:normal;">Taxable</div><div class="t" style="left:1375.00px;top:735.52px;font-size:11.2px;color:#111;font-weight:normal;">0</div><div class="t" style="left:1451.00px;top:735.52px;font-size:11.2px;color:#111;font-weight:normal;">122</div><div class="a" style="left:1525px;top:730px;width:39px;height:19px;background:#57bfa6;border-radius:3px;"></div><div class="t" style="left:1544.50px;top:734.69px;font-size:11px;color:#fff;font-weight:bold;transform:translateX(-50%);">Active</div><div class="a" style="left:1591px;top:730px;width:59px;height:19px;background:#57bfa6;border-radius:3px;"></div><div class="t" style="left:1620.50px;top:734.69px;font-size:11px;color:#fff;font-weight:bold;transform:translateX(-50%);">Approved</div><div class="a" style="left:1681px;top:730px;width:59px;height:19px;background:#57bfa6;border-radius:3px;"></div><div class="t" style="left:1710.50px;top:734.69px;font-size:11px;color:#fff;font-weight:bold;transform:translateX(-50%);">Approved</div><div class="t" style="left:1758.00px;top:735.52px;font-size:11.2px;color:#111;font-weight:normal;">0</div><div class="a" style="left:1803px;top:730px;width:37px;height:23px;background:#f0f1f3;border-radius:4px;"></div><svg class="a" style="left:1809px;top:736.5px;" width="14" height="11" viewBox="0 0 14 11"><path d="M8.2 1.8H2.2A1.5 1.5 0 0 0 .7 3.3v5.5a1.5 1.5 0 0 0 1.5 1.5h7a1.5 1.5 0 0 0 1.5-1.5V6.2" fill="none" stroke="#555" stroke-width="1.3"/><path d="M4.6 8l.6-2.4L10.8 0 12.9 2.1 7.2 7.6z" fill="#555"/><path d="M5.6 6.4l1.2 1.2" stroke="#f0f1f3" stroke-width=".7"/></svg><svg class="a" style="left:1826px;top:739.5px;" width="8" height="4" viewBox="0 0 8 4"><path d="M0 0H8L4 4z" fill="#555"/></svg><div class="a" style="left:365px;top:779px;width:12px;height:12px;background:linear-gradient(#f2f2f2,#dcdcdc);border:1px solid #999;border-radius:2px;box-sizing:border-box;"></div><svg class="a" style="left:387px;top:763px;" width="40" height="40" viewBox="0 0 40 40"><rect width="40" height="40" fill="#fff"/><path d="M13.8 9.7L25.5 9.7 20.9 27.5 14.3 27.5z" fill="#ece3c8"/><path d="M0 14.3L10.7 11 19.4 29.5 12.3 32.6z" fill="#3b2a16"/><path d="M27.5 8.9L39.7 12 34.1 31.8 20.1 27z" fill="#7a3e22"/><g fill="#c9a14a"><circle cx="5" cy="16" r="1.2"/><circle cx="9" cy="21" r="1.3"/><circle cx="13" cy="26" r="1.1"/><circle cx="7.5" cy="14" r=".9"/></g><g fill="#e2b98a"><circle cx="30" cy="13" r="1.4"/><circle cx="34" cy="18" r="1.3"/><circle cx="28" cy="20" r="1.2"/><circle cx="32" cy="25" r="1.3"/><circle cx="25" cy="26" r="1"/></g><g fill="#7a4a30"><circle cx="17" cy="12" r="1"/><circle cx="19" cy="18" r="1"/><circle cx="16" cy="23" r="1"/></g><g fill="#e8b8c0"><circle cx="21" cy="13" r=".9"/><circle cx="17" cy="20" r=".9"/></g></svg><div class="t" style="left:448.00px;top:775.84px;font-size:12px;color:#3cb4e4;font-weight:normal;letter-spacing:-0.25px;">2968</div><div class="t" style="left:631.00px;top:775.84px;font-size:12px;color:#111;font-weight:normal;letter-spacing:-0.25px;">Gourmet Chocolate Bar</div><div class="t" style="left:1090.00px;top:776.52px;font-size:11.2px;color:#111;font-weight:normal;">$0.00</div><div class="t" style="left:1144.00px;top:776.52px;font-size:11.2px;color:#111;font-weight:normal;">$5.00</div><div class="t" style="left:1262.00px;top:778.20px;font-size:10.4px;color:#5cbba2;font-weight:normal;">Tax Inc</div><div class="t" style="left:1317.00px;top:778.20px;font-size:10.4px;color:#5cbba2;font-weight:normal;">Taxable</div><div class="t" style="left:1375.00px;top:776.52px;font-size:11.2px;color:#111;font-weight:normal;">0</div><div class="t" style="left:1451.00px;top:776.52px;font-size:11.2px;color:#111;font-weight:normal;">64</div><div class="a" style="left:1525px;top:771px;width:39px;height:19px;background:#57bfa6;border-radius:3px;"></div><div class="t" style="left:1544.50px;top:775.69px;font-size:11px;color:#fff;font-weight:bold;transform:translateX(-50%);">Active</div><div class="a" style="left:1591px;top:771px;width:59px;height:19px;background:#57bfa6;border-radius:3px;"></div><div class="t" style="left:1620.50px;top:775.69px;font-size:11px;color:#fff;font-weight:bold;transform:translateX(-50%);">Approved</div><div class="a" style="left:1681px;top:771px;width:59px;height:19px;background:#57bfa6;border-radius:3px;"></div><div class="t" style="left:1710.50px;top:775.69px;font-size:11px;color:#fff;font-weight:bold;transform:translateX(-50%);">Approved</div><div class="t" style="left:1758.00px;top:776.52px;font-size:11.2px;color:#111;font-weight:normal;">0</div><div class="a" style="left:1803px;top:771px;width:37px;height:23px;background:#f0f1f3;border-radius:4px;"></div><svg class="a" style="left:1809px;top:777.5px;" width="14" height="11" viewBox="0 0 14 11"><path d="M8.2 1.8H2.2A1.5 1.5 0 0 0 .7 3.3v5.5a1.5 1.5 0 0 0 1.5 1.5h7a1.5 1.5 0 0 0 1.5-1.5V6.2" fill="none" stroke="#555" stroke-width="1.3"/><path d="M4.6 8l.6-2.4L10.8 0 12.9 2.1 7.2 7.6z" fill="#555"/><path d="M5.6 6.4l1.2 1.2" stroke="#f0f1f3" stroke-width=".7"/></svg><svg class="a" style="left:1826px;top:780.5px;" width="8" height="4" viewBox="0 0 8 4"><path d="M0 0H8L4 4z" fill="#555"/></svg><svg class="a" style="left:544px;top:779px;" width="15" height="8" viewBox="0 0 15 8"><rect x=".8" y=".8" width="7" height="6.4" rx="3.2" fill="none" stroke="#555" stroke-width="1.5"/><rect x="7" y=".8" width="7" height="6.4" rx="3.2" fill="none" stroke="#555" stroke-width="1.5"/><path d="M4 4h7" stroke="#555" stroke-width="1.5"/></svg><div class="a" style="left:365px;top:820px;width:12px;height:12px;background:linear-gradient(#f2f2f2,#dcdcdc);border:1px solid #999;border-radius:2px;box-sizing:border-box;"></div><svg class="a" style="left:387px;top:804px;" width="40" height="40" viewBox="0 0 40 40"><path d="M12.4 12.5l1.2-4.3h12.2l1.2 4.3h4.9c1 0 1.8.8 1.8 1.8v13.5c0 1-.8 1.8-1.8 1.8H8.1c-1 0-1.8-.8-1.8-1.8V14.3c0-1 .8-1.8 1.8-1.8z" fill="#c8c8c8"/><circle cx="19.9" cy="20.4" r="6" fill="none" stroke="#fff" stroke-width="1.9"/><rect x="6.5" y="30.5" width="27" height="2.5" fill="#efefef"/></svg><div class="t" style="left:448.00px;top:816.84px;font-size:12px;color:#3cb4e4;font-weight:normal;letter-spacing:-0.25px;">2972</div><div class="t" style="left:631.00px;top:816.84px;font-size:12px;color:#111;font-weight:normal;letter-spacing:-0.25px;">Gourmet Mixed Chocolates 200g</div><div class="t" style="left:1090.00px;top:817.52px;font-size:11.2px;color:#111;font-weight:normal;">$0.00</div><div class="t" style="left:1144.00px;top:817.52px;font-size:11.2px;color:#111;font-weight:normal;">$20.00</div><div class="t" style="left:1262.00px;top:819.20px;font-size:10.4px;color:#5cbba2;font-weight:normal;">Tax Inc</div><div class="t" style="left:1317.00px;top:819.20px;font-size:10.4px;color:#5cbba2;font-weight:normal;">Taxable</div><div class="t" style="left:1375.00px;top:817.52px;font-size:11.2px;color:#111;font-weight:normal;">0</div><div class="t" style="left:1451.00px;top:817.52px;font-size:11.2px;color:#111;font-weight:normal;">21</div><div class="a" style="left:1525px;top:812px;width:39px;height:19px;background:#57bfa6;border-radius:3px;"></div><div class="t" style="left:1544.50px;top:816.69px;font-size:11px;color:#fff;font-weight:bold;transform:translateX(-50%);">Active</div><div class="a" style="left:1591px;top:812px;width:59px;height:19px;background:#57bfa6;border-radius:3px;"></div><div class="t" style="left:1620.50px;top:816.69px;font-size:11px;color:#fff;font-weight:bold;transform:translateX(-50%);">Approved</div><div class="a" style="left:1681px;top:812px;width:59px;height:19px;background:#57bfa6;border-radius:3px;"></div><div class="t" style="left:1710.50px;top:816.69px;font-size:11px;color:#fff;font-weight:bold;transform:translateX(-50%);">Approved</div><div class="t" style="left:1758.00px;top:817.52px;font-size:11.2px;color:#111;font-weight:normal;">0</div><div class="a" style="left:1803px;top:812px;width:37px;height:23px;background:#f0f1f3;border-radius:4px;"></div><svg class="a" style="left:1809px;top:818.5px;" width="14" height="11" viewBox="0 0 14 11"><path d="M8.2 1.8H2.2A1.5 1.5 0 0 0 .7 3.3v5.5a1.5 1.5 0 0 0 1.5 1.5h7a1.5 1.5 0 0 0 1.5-1.5V6.2" fill="none" stroke="#555" stroke-width="1.3"/><path d="M4.6 8l.6-2.4L10.8 0 12.9 2.1 7.2 7.6z" fill="#555"/><path d="M5.6 6.4l1.2 1.2" stroke="#f0f1f3" stroke-width=".7"/></svg><svg class="a" style="left:1826px;top:821.5px;" width="8" height="4" viewBox="0 0 8 4"><path d="M0 0H8L4 4z" fill="#555"/></svg><div class="a" style="left:365px;top:861px;width:12px;height:12px;background:linear-gradient(#f2f2f2,#dcdcdc);border:1px solid #999;border-radius:2px;box-sizing:border-box;"></div><svg class="a" style="left:387px;top:845px;" width="40" height="40" viewBox="0 0 40 40"><rect width="40" height="40" fill="#fff"/><path d="M11 14.5c-2 3-1.8 10 1 14s11 4 14 0 3-11 1-14z" fill="#c8582a"/><ellipse cx="19.3" cy="11.6" rx="7.6" ry="3.2" fill="#eddc9a"/><path d="M15.5 17.5L31.5 21.5 30 26.5 14 22.5z" fill="#efe3c3"/></svg><div class="t" style="left:448.00px;top:857.84px;font-size:12px;color:#3cb4e4;font-weight:normal;letter-spacing:-0.25px;">2973</div><div class="t" style="left:631.00px;top:857.84px;font-size:12px;color:#111;font-weight:normal;letter-spacing:-0.25px;">Home Made Marmalade 100g</div><div class="t" style="left:1090.00px;top:858.52px;font-size:11.2px;color:#111;font-weight:normal;">$0.00</div><div class="t" style="left:1144.00px;top:858.52px;font-size:11.2px;color:#111;font-weight:normal;">$5.00</div><div class="t" style="left:1262.00px;top:860.20px;font-size:10.4px;color:#5cbba2;font-weight:normal;">Tax Inc</div><div class="t" style="left:1317.00px;top:860.20px;font-size:10.4px;color:#5cbba2;font-weight:normal;">Taxable</div><div class="t" style="left:1375.00px;top:858.52px;font-size:11.2px;color:#111;font-weight:normal;">0</div><div class="t" style="left:1451.00px;top:858.52px;font-size:11.2px;color:#111;font-weight:normal;">15</div><div class="a" style="left:1525px;top:853px;width:39px;height:19px;background:#57bfa6;border-radius:3px;"></div><div class="t" style="left:1544.50px;top:857.69px;font-size:11px;color:#fff;font-weight:bold;transform:translateX(-50%);">Active</div><div class="a" style="left:1591px;top:853px;width:59px;height:19px;background:#57bfa6;border-radius:3px;"></div><div class="t" style="left:1620.50px;top:857.69px;font-size:11px;color:#fff;font-weight:bold;transform:translateX(-50%);">Approved</div><div class="a" style="left:1681px;top:853px;width:59px;height:19px;background:#57bfa6;border-radius:3px;"></div><div class="t" style="left:1710.50px;top:857.69px;font-size:11px;color:#fff;font-weight:bold;transform:translateX(-50%);">Approved</div><div class="t" style="left:1758.00px;top:858.52px;font-size:11.2px;color:#111;font-weight:normal;">0</div><div class="a" style="left:1803px;top:853px;width:37px;height:23px;background:#f0f1f3;border-radius:4px;"></div><svg class="a" style="left:1809px;top:859.5px;" width="14" height="11" viewBox="0 0 14 11"><path d="M8.2 1.8H2.2A1.5 1.5 0 0 0 .7 3.3v5.5a1.5 1.5 0 0 0 1.5 1.5h7a1.5 1.5 0 0 0 1.5-1.5V6.2" fill="none" stroke="#555" stroke-width="1.3"/><path d="M4.6 8l.6-2.4L10.8 0 12.9 2.1 7.2 7.6z" fill="#555"/><path d="M5.6 6.4l1.2 1.2" stroke="#f0f1f3" stroke-width=".7"/></svg><svg class="a" style="left:1826px;top:862.5px;" width="8" height="4" viewBox="0 0 8 4"><path d="M0 0H8L4 4z" fill="#555"/></svg><div class="a" style="left:365px;top:902px;width:12px;height:12px;background:linear-gradient(#f2f2f2,#dcdcdc);border:1px solid #999;border-radius:2px;box-sizing:border-box;"></div><svg class="a" style="left:387px;top:886px;" width="40" height="40" viewBox="0 0 40 40"><rect x="1.5" y=".8" width="37.5" height="38" fill="#fff" stroke="#c9454b" stroke-width="1.4"/><path d="M14 3l11-1 2.6 36H14z" fill="#d8772a"/><path d="M14 3h3.5v35H14z" fill="#5b3a58"/><circle cx="21.5" cy="7.5" r="3" fill="#3a2a2a"/></svg><div class="t" style="left:448.00px;top:898.84px;font-size:12px;color:#3cb4e4;font-weight:normal;letter-spacing:-0.25px;">2974</div><div class="t" style="left:631.00px;top:898.84px;font-size:12px;color:#111;font-weight:normal;letter-spacing:-0.25px;">Gourmet Biscuits 100g</div><div class="t" style="left:1090.00px;top:899.52px;font-size:11.2px;color:#111;font-weight:normal;">$0.00</div><div class="t" style="left:1144.00px;top:899.52px;font-size:11.2px;color:#111;font-weight:normal;">$120.00</div><div class="t" style="left:1262.00px;top:901.20px;font-size:10.4px;color:#5cbba2;font-weight:normal;">Tax Inc</div><div class="t" style="left:1317.00px;top:901.20px;font-size:10.4px;color:#5cbba2;font-weight:normal;">Taxable</div><div class="t" style="left:1375.00px;top:899.52px;font-size:11.2px;color:#111;font-weight:normal;">0</div><div class="t" style="left:1451.00px;top:899.52px;font-size:11.2px;color:#111;font-weight:normal;">9</div><div class="a" style="left:1525px;top:894px;width:39px;height:19px;background:#57bfa6;border-radius:3px;"></div><div class="t" style="left:1544.50px;top:898.69px;font-size:11px;color:#fff;font-weight:bold;transform:translateX(-50%);">Active</div><div class="a" style="left:1591px;top:894px;width:59px;height:19px;background:#57bfa6;border-radius:3px;"></div><div class="t" style="left:1620.50px;top:898.69px;font-size:11px;color:#fff;font-weight:bold;transform:translateX(-50%);">Approved</div><div class="a" style="left:1681px;top:894px;width:59px;height:19px;background:#57bfa6;border-radius:3px;"></div><div class="t" style="left:1710.50px;top:898.69px;font-size:11px;color:#fff;font-weight:bold;transform:translateX(-50%);">Approved</div><div class="t" style="left:1758.00px;top:899.52px;font-size:11.2px;color:#111;font-weight:normal;">0</div><div class="a" style="left:1803px;top:894px;width:37px;height:23px;background:#f0f1f3;border-radius:4px;"></div><svg class="a" style="left:1809px;top:900.5px;" width="14" height="11" viewBox="0 0 14 11"><path d="M8.2 1.8H2.2A1.5 1.5 0 0 0 .7 3.3v5.5a1.5 1.5 0 0 0 1.5 1.5h7a1.5 1.5 0 0 0 1.5-1.5V6.2" fill="none" stroke="#555" stroke-width="1.3"/><path d="M4.6 8l.6-2.4L10.8 0 12.9 2.1 7.2 7.6z" fill="#555"/><path d="M5.6 6.4l1.2 1.2" stroke="#f0f1f3" stroke-width=".7"/></svg><svg class="a" style="left:1826px;top:903.5px;" width="8" height="4" viewBox="0 0 8 4"><path d="M0 0H8L4 4z" fill="#555"/></svg></body></html>
